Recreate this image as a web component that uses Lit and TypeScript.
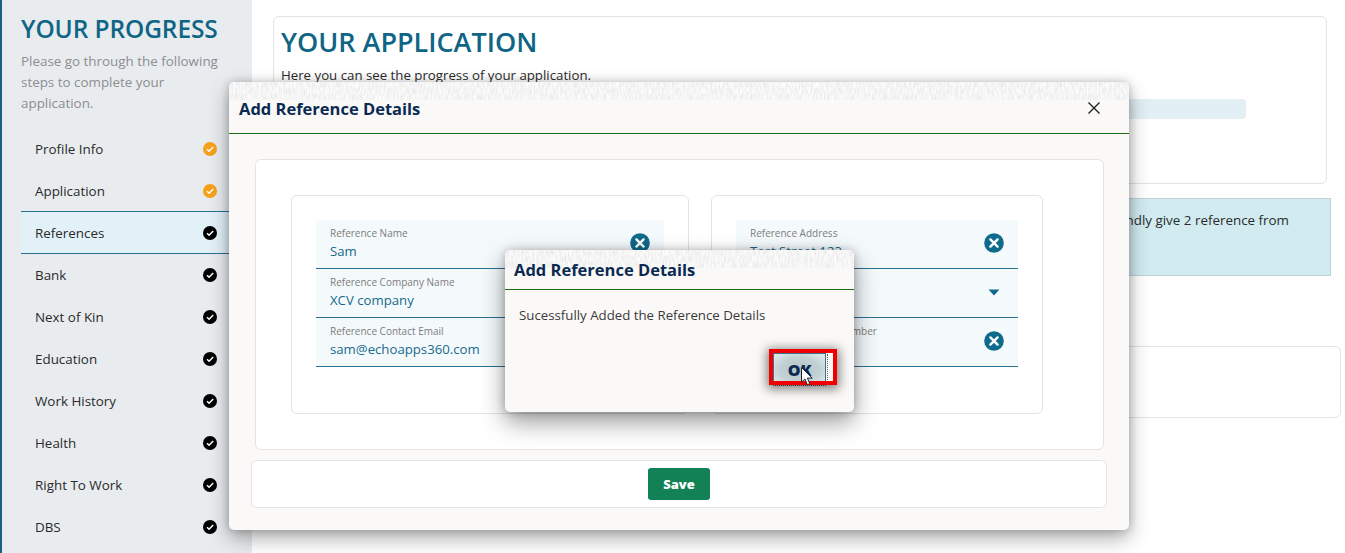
import { LitElement, html, css, svg } from "lit";
import { customElement } from "lit/decorators.js";

const STEPS = [
  { name: "Profile Info", done: true },
  { name: "Application", done: true },
  { name: "References", done: false, active: true },
  { name: "Bank", done: false },
  { name: "Next of Kin", done: false },
  { name: "Education", done: false },
  { name: "Work History", done: false },
  { name: "Health", done: false },
  { name: "Right To Work", done: false },
  { name: "DBS", done: false },
];

const clearIcon = html`<svg class="clear" viewBox="0 0 20 20" width="20" height="20">
  <circle cx="10" cy="10" r="9.8" fill="#0f6a8b"></circle>
  <path d="M6.4 6.4l7.2 7.2M13.6 6.4l-7.2 7.2" stroke="#fff" stroke-width="2.4" stroke-linecap="round"></path>
</svg>`;

const checkIcon = (color: string) => svg`<svg class="check" viewBox="0 0 14 14" width="14" height="14">
  <circle cx="7" cy="7" r="7" fill=${color}></circle>
  <path d="M4 7.2l2.1 2.1L10.2 5" fill="none" stroke="#fff" stroke-width="1.5"></path>
</svg>`;

// mottled band on top of each dialog
const texture = (id: string) => html`<svg class="texture" width="100%" height="18">
  <defs>
    <filter id=${id} x="0" y="0" width="100%" height="100%">
      <feTurbulence type="fractalNoise" baseFrequency="0.6 0.16" numOctaves="2" seed="4"></feTurbulence>
      <feColorMatrix type="matrix" values="0.3 0 0 0 0.76  0.3 0 0 0 0.76  0.3 0 0 0 0.76  0 0 0 0 1"></feColorMatrix>
    </filter>
  </defs>
  <rect width="100%" height="18" filter="url(#${id})"></rect>
</svg>`;

@customElement("app-root")
export class AppRoot extends LitElement {
  static styles = css`
    :host {
      display: block;
      position: relative;
      width: 1345px;
      height: 553px;
      overflow: hidden;
      background: #fff;
      font-family: "Open Sans", "Noto Sans", sans-serif;
      color: #2b2b2b;
    }
    .page {
      display: flex;
      height: 553px;
    }
    .sidebar {
      box-sizing: border-box;
      width: 252px;
      flex: none;
      height: 553px;
      padding: 13px 0 0 19px;
      background: #e9ecef;
      border-left: 2px solid #17607f;
      overflow: hidden;
    }
    .sidebar h2 {
      margin: 0;
      font-size: 24.5px;
      line-height: 32px;
      font-weight: 600;
      color: #0f6585;
      letter-spacing: -0.1px;
      white-space: nowrap;
    }
    .sidebar p {
      margin: 6px 0 14px;
      width: 205px;
      font-size: 13.4px;
      line-height: 21px;
      color: #8b8e92;
    }
    .step {
      box-sizing: border-box;
      display: flex;
      align-items: center;
      justify-content: space-between;
      height: 42px;
      padding: 0 35px 0 14px;
      font-size: 13.4px;
      color: #2a2a2a;
    }
    .step.active {
      height: 43px;
      margin-top: -1px;
      background: #e2f0f7;
      border-top: 1px solid #2a6f90;
      border-bottom: 1px solid #2a6f90;
    }
    .check {
      display: block;
    }
    main {
      flex: 1;
      min-width: 0;
      padding: 16px 4px 0 21px;
    }
    .card {
      box-sizing: border-box;
      border: 1px solid #e4e4e4;
      border-radius: 6px;
      background: #fff;
    }
    .app-card {
      width: 1054px;
      height: 168px;
      padding: 6px 7px;
    }
    .app-card h1 {
      margin: 0;
      font-size: 27px;
      line-height: 38px;
      font-weight: 600;
      color: #0f6585;
    }
    .app-card .lead {
      margin: 5px 0 0;
      font-size: 13.25px;
      line-height: 18px;
    }
    .bar {
      width: 965px;
      height: 20px;
      margin-top: 15px;
      border-radius: 4px;
      background: #e2eff5;
    }
    .alert {
      box-sizing: border-box;
      width: 1058px;
      height: 78px;
      margin-top: 14px;
      padding: 11px 41px 0 0;
      text-align: right;
      font-size: 13.4px;
      line-height: 20px;
      background: #d1ebf0;
      border: 1px solid #bdd3dc;
    }
    .lower {
      width: 1068px;
      height: 72px;
      margin-top: 70px;
    }
    .modal {
      position: absolute;
      box-sizing: border-box;
      background: #faf9f7;
      border-radius: 5px;
      box-shadow: 0 8px 20px rgba(0, 0, 0, 0.34), 0 0 8px rgba(0, 0, 0, 0.2);
      display: flex;
      flex-direction: column;
    }
    .big {
      left: 229px;
      top: 82px;
      width: 900px;
      height: 448px;
    }
    .small {
      left: 505px;
      top: 250px;
      width: 349px;
      height: 162px;
      box-shadow: 0 10px 24px rgba(0, 0, 0, 0.4), 0 0 8px rgba(0, 0, 0, 0.22);
    }
    .texture {
      display: block;
      flex: none;
      border-radius: 5px 5px 0 0;
    }
    .head {
      flex: none;
      box-sizing: border-box;
      display: flex;
      align-items: flex-start;
      justify-content: space-between;
      height: 34px;
      padding: 0 28px 0 10px;
      border-bottom: 1px solid #176e17;
    }
    .head h3 {
      margin: 0;
      font-size: 16.5px;
      line-height: 18px;
      font-weight: 700;
      color: #0a2a52;
    }
    .small .head {
      height: 22px;
      padding: 0 9px;
    }
    .small .head h3 {
      line-height: 3px;
    }
    .close {
      display: block;
      margin-top: 1px;
    }
    .body-card {
      box-sizing: border-box;
      width: 849px;
      height: 291px;
      margin: 25px 0 0 26px;
      padding: 35px 0 0 35px;
      display: flex;
      gap: 22px;
    }
    .group {
      box-sizing: border-box;
      height: 219px;
      padding: 24px 24px 0;
      border: 1px solid #e4e4e4;
      border-radius: 6px;
    }
    .group.left {
      width: 398px;
    }
    .group.right {
      width: 332px;
    }
    .field {
      box-sizing: border-box;
      position: relative;
      height: 49px;
      padding: 6px 14px 0;
      background: #f4f9fc;
      border-bottom: 1px solid #2a6f90;
      display: flex;
      flex-direction: column;
    }
    .field:first-child {
      border-radius: 4px 4px 0 0;
    }
    .field label {
      font-size: 10px;
      line-height: 14px;
      color: #7d7d7d;
      white-space: nowrap;
    }
    .field span {
      font-size: 13.2px;
      line-height: 20px;
      margin-top: 1px;
      color: #176a8c;
      white-space: nowrap;
    }
    .field .clear,
    .field .caret {
      position: absolute;
      right: 14px;
      top: 13px;
    }
    .field .caret {
      top: 20px;
      right: 18px;
    }
    .foot-card {
      box-sizing: border-box;
      width: 856px;
      height: 48px;
      margin: 10px 0 0 22px;
      display: flex;
      align-items: center;
      justify-content: center;
    }
    .save {
      width: 62px;
      height: 32px;
      border: 0;
      border-radius: 3px;
      background: #138156;
      color: #fff;
      font: 800 13px "Open Sans", sans-serif;
    }
    .small .msg {
      margin: 15px 0 0 14px;
      font-size: 13.25px;
      line-height: 20px;
      color: #3a3a3a;
    }
    .actions {
      flex: 1;
      display: flex;
      justify-content: flex-end;
      align-items: flex-end;
      padding: 0 28px 26px 0;
    }
    .ok {
      position: relative;
      box-sizing: border-box;
      width: 53px;
      height: 33px;
      padding: 0;
      border: 1px solid #3b7186;
      border-bottom: 1px dotted #555;
      border-radius: 0;
      background: radial-gradient(ellipse at 50% 50%, #b3c4c8 0%, #c3d1d4 55%, #e4eef1 100%);
      color: #0a2a52;
      font: 800 16px "Open Sans", sans-serif;
    }
    .ok::after {
      content: "";
      position: absolute;
      left: 53px;
      top: 0;
      height: 30px;
      border-left: 1px dotted #666;
    }
    .redbox {
      position: absolute;
      left: 264px;
      top: 99px;
      box-sizing: border-box;
      width: 68px;
      height: 36px;
      border: 4px solid #f00000;
      box-shadow: 0 2px 10px 2px rgba(0, 0, 0, 0.5);
    }
    .pointer {
      position: absolute;
      left: 801px;
      top: 367px;
    }
  `;

  field(label: string, value: string, icon: unknown = clearIcon) {
    return html`<div class="field">
      <label>${label}</label>
      <span>${value}</span>
      ${icon}
    </div>`;
  }

  render() {
    return html`
      <div class="page">
        <aside class="sidebar">
          <h2>YOUR PROGRESS</h2>
          <p>Please go through the following steps to complete your application.</p>
          ${STEPS.map(
            (s) => html`<div class="step ${s.active ? "active" : ""}">
              <span>${s.name}</span>
              ${checkIcon(s.done ? "#f7a11a" : "#000")}
            </div>`
          )}
        </aside>
        <main>
          <section class="card app-card">
            <h1>YOUR APPLICATION</h1>
            <p class="lead">Here you can see the progress of your application.</p>
            <div class="bar"></div>
          </section>
          <div class="alert">Kindly give 2 reference from</div>
          <section class="card lower"></section>
        </main>
      </div>

      <div class="modal big">
        ${texture("tex-big")}
        <div class="head">
          <h3>Add Reference Details</h3>
          <svg class="close" viewBox="0 0 14 14" width="14" height="14">
            <path d="M1.5 1.5l11 11M12.5 1.5l-11 11" stroke="#222" stroke-width="1.4"></path>
          </svg>
        </div>
        <div class="card body-card">
          <div class="group left">
            ${this.field("Reference Name", "Sam")}
            ${this.field("Reference Company Name", "XCV company", "")}
            ${this.field("Reference Contact Email", "sam@echoapps360.com", "")}
          </div>
          <div class="group right">
            ${this.field("Reference Address", "Test Street 123")}
            ${this.field(
              "",
              "",
              html`<svg class="caret" viewBox="0 0 12 7" width="12" height="7"><path d="M0.5 0.5h11L6 6.5z" fill="#0f6a8b"></path></svg>`
            )}
            ${this.field("Reference Contact Number", "")}
          </div>
        </div>
        <div class="card foot-card"><button class="save">Save</button></div>
      </div>

      <div class="modal small">
        ${texture("tex-small")}
        <div class="head"><h3>Add Reference Details</h3></div>
        <div class="msg">Sucessfully Added the Reference Details</div>
        <div class="actions"><button class="ok">OK</button></div>
        <div class="redbox"></div>
      </div>

      <svg class="pointer" viewBox="0 0 12 19" width="12" height="19">
        <path d="M0.5 0.5v14.6l3.4-3.2 2.4 5.8 2.5-1-2.4-5.6h4.8z" fill="#fff" stroke="#222" stroke-width="1"></path>
      </svg>
    `;
  }
}
